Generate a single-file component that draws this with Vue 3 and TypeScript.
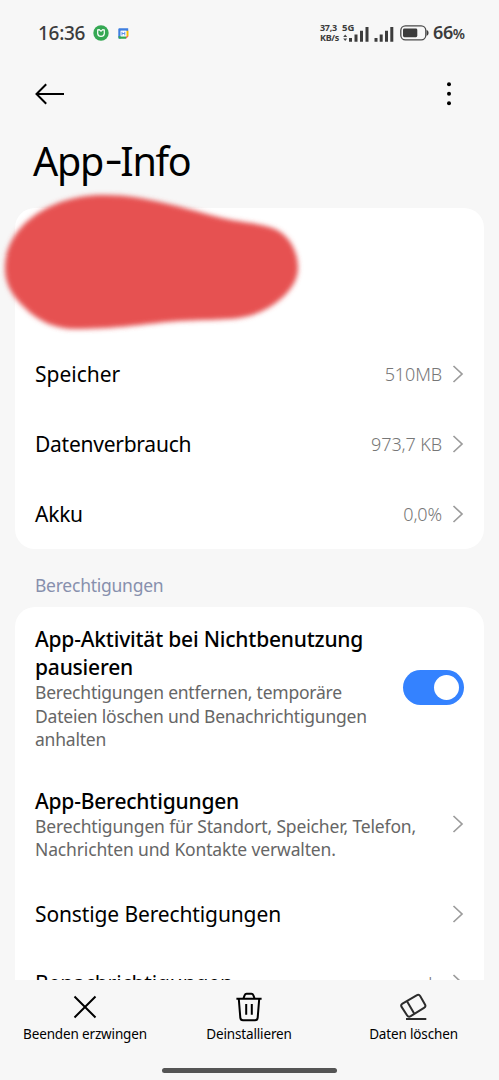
<script setup lang="ts">
interface StatRow {
  id: string
  label: string
  value: string
}

interface PermissionRow {
  id: string
  title: string[]
  description: string[]
  control: 'switch' | 'chevron'
  value?: string
}

interface BottomAction {
  id: 'stop' | 'remove' | 'clear'
  label: string
}

const stats: StatRow[] = [
  { id: 'storage', label: 'Speicher', value: '510MB' },
  { id: 'data', label: 'Datenverbrauch', value: '973,7 KB' },
  { id: 'power', label: 'Akku', value: '0,0%' },
]

const permissions: PermissionRow[] = [
  {
    id: 'pause',
    title: ['App-Aktivität bei Nichtbenutzung', 'pausieren'],
    description: [
      'Berechtigungen entfernen, temporäre',
      'Dateien löschen und Benachrichtigungen',
      'anhalten',
    ],
    control: 'switch',
  },
  {
    id: 'perms',
    title: ['App-Berechtigungen'],
    description: [
      'Berechtigungen für Standort, Speicher, Telefon,',
      'Nachrichten und Kontakte verwalten.',
    ],
    control: 'chevron',
  },
  { id: 'other', title: ['Sonstige Berechtigungen'], description: [], control: 'chevron' },
  { id: 'notify', title: ['Benachrichtigungen'], description: [], control: 'chevron', value: 'Ja' },
]

const actions: BottomAction[] = [
  { id: 'stop', label: 'Beenden erzwingen' },
  { id: 'remove', label: 'Deinstallieren' },
  { id: 'clear', label: 'Daten löschen' },
]
</script>

<template>
  <div class="screen">
    <header class="status">
      <span class="clock">16:36</span>
      <svg class="shield" width="16" height="16" viewBox="0 0 16 16">
        <circle cx="8" cy="8" r="7.7" fill="#35a853" />
        <path d="M4.7 4.9 6.2 4.6 8 6.2 9.8 4.6 11.3 4.9V8.6Q11 11.3 8 11.3T4.7 8.6Z" fill="none" stroke="#fff" stroke-width="1.2" />
      </svg>
      <svg class="calendar" width="11" height="11" viewBox="0 0 11 11">
        <path d="M1 .3H10.2V3H2.8V10.5H.3V1Z" fill="#3f7fe0" />
        <path d="M8.2 2.8H10.5V8.2H8.2Z" fill="#fbbc04" />
        <path d="M.3 8.3H8.2V10.7H1Z" fill="#34a853" />
        <path d="M8.2 8.2H10.5L8.2 10.6Z" fill="#ea4335" />
        <path d="M2.6 2.6H8.4V8.4H2.6Z" fill="#fff" />
        <path d="M4 3.8V7.4M6.8 3.8V7.4M4 5.5H6.8" stroke="#5b8fe6" stroke-width="1" />
      </svg>
      <div class="net">
        <span>37,3</span>
        <span>KB/s</span>
      </div>
      <svg class="bars" width="26" height="20" viewBox="0 0 26 20">
        <path d="M3.2 11.4 5.2 14H1.2ZM3.2 18 5.2 15.4H1.2Z" fill="#444" />
        <path d="M7 15h3v3.7H7zM12.5 11.6h3v7.1h-3zM18 7.8h3v10.9h-3zM23.5 4h3v14.7h-3z" fill="#3c3c3c" />
        <text class="band" x="0" y="8.4">5G</text>
      </svg>
      <svg class="bars second" width="20" height="20" viewBox="0 0 20 20">
        <path d="M.5 15h3v3.7h-3zM5.7 11.6h3v7.1h-3zM11 7.8h3v10.9h-3zM16.3 4h3v14.7h-3z" fill="#3c3c3c" />
      </svg>
      <svg class="battery" width="29" height="16" viewBox="0 0 29 16">
        <rect x=".8" y=".9" width="25" height="14" rx="4.6" fill="none" stroke="#4a4a4a" stroke-width="1.3" />
        <rect x="3" y="3.6" width="14.3" height="8.6" rx="1.4" fill="#3c3c3c" />
        <path d="M26.6 4.8Q28.6 5.8 28.6 7.9T26.6 11Z" fill="#3c3c3c" />
      </svg>
      <span class="percent">66<small>%</small></span>
    </header>

    <nav class="toolbar">
      <svg width="30" height="22" viewBox="0 0 30 22">
        <path d="M29 11H1.5M11.2 1.3 1.5 11 11.2 20.7" fill="none" stroke="#000" stroke-width="2" />
      </svg>
      <svg width="6" height="26" viewBox="0 0 6 26">
        <circle cx="3" cy="3.3" r="2" />
        <circle cx="3" cy="12.8" r="2" />
        <circle cx="3" cy="22.3" r="2" />
      </svg>
    </nav>

    <h1>App<span class="dash">-</span>Info</h1>

    <section class="card summary">
      <div class="identity">
        <svg class="mask" width="320" height="160" viewBox="0 185 320 160">
          <defs>
            <filter id="soft" x="-10%" y="-10%" width="120%" height="120%">
              <feGaussianBlur stdDeviation="2.8" />
            </filter>
          </defs>
          <path
            filter="url(#soft)"
            fill="#e65151"
            d="M5 268C5 226 50 195 104 195C146 195 186 209 222 218C243 223 261 223 275 229C290 236 298 252 298 268C298 289 274 309 249 316C231 321 201 319 167 322C137 325 115 329 75 329C55 329 38 321 25 308C12 296 5 284 5 268Z"
          />
        </svg>
      </div>
      <div v-for="row in stats" :key="row.id" class="row" :class="row.id">
        <span class="title">{{ row.label }}</span>
        <span class="value">{{ row.value }}</span>
        <svg class="chevron" width="12" height="18" viewBox="0 0 12 18">
          <path d="M1.5 1 10 9 1.5 17" />
        </svg>
      </div>
    </section>

    <h2>Berechtigungen</h2>

    <section class="card permissions">
      <div v-for="row in permissions" :key="row.id" class="row" :class="row.id">
        <div class="copy">
          <div v-for="line in row.title" :key="line" class="title">{{ line }}</div>
          <div v-for="line in row.description" :key="line" class="desc">{{ line }}</div>
        </div>
        <div v-if="row.control === 'switch'" class="switch"><i></i></div>
        <template v-else>
          <span v-if="row.value" class="value">{{ row.value }}</span>
          <svg class="chevron" width="12" height="18" viewBox="0 0 12 18">
            <path d="M1.5 1 10 9 1.5 17" />
          </svg>
        </template>
      </div>
    </section>

    <footer class="actions">
      <div class="buttons">
        <div v-for="action in actions" :key="action.id" class="action">
          <svg v-if="action.id === 'stop'" width="30" height="30" viewBox="0 0 30 30">
            <path d="M4.5 4.5 25.5 25.5M25.5 4.5 4.5 25.5" stroke="#000" stroke-width="2" />
          </svg>
          <svg v-else-if="action.id === 'remove'" width="30" height="30" viewBox="0 0 30 30" fill="none" stroke="#000" stroke-width="2">
            <path d="M2.4 6.7H27.6M9.4 6.5 10.6 3.3Q11.2 1.8 12.6 1.8H17.4Q18.8 1.8 19.4 3.3L20.6 6.5M4.8 7 6.3 25.6Q6.5 28.2 9 28.2H21Q23.5 28.2 23.7 25.6L25.2 7M12.2 12V22.8M17.8 12V22.8" />
          </svg>
          <svg v-else width="30" height="30" viewBox="0 0 30 30" fill="none" stroke="#2c2c2c" stroke-width="2">
            <path d="M3.5 11.6 17.6 3.3Q19.9 2 21.3 4.2L26 12.4Q27.2 14.6 25 15.9L11.7 24.2Q9.4 25.5 8 23.3L2.6 14.9Q1.4 12.8 3.5 11.6ZM8 9.2 15.3 21.8M7 27H27.3" />
          </svg>
          <span>{{ action.label }}</span>
        </div>
      </div>
      <div class="handle"></div>
    </footer>
  </div>
</template>

<style>
body {
  margin: 0;
  background: #f7f7f7;
}
</style>

<style scoped>
.screen {
  display: flex;
  flex-direction: column;
  width: 499px;
  height: 1080px;
  overflow: hidden;
  background: #f7f7f7;
  color: #000;
  font-family: "Noto Sans", "Open Sans", sans-serif;
}

svg {
  display: block;
  flex: none;
}

.status {
  display: flex;
  align-items: center;
  height: 66px;
  padding: 0 34px 0 38px;
  box-sizing: border-box;
  color: #3c3c3c;
}

.clock {
  width: 55px;
  font-size: 19px;
  font-weight: 500;
  letter-spacing: -0.3px;
}

.calendar {
  margin-left: 9px;
}

.net {
  display: flex;
  flex-direction: column;
  width: 22px;
  margin-left: auto;
  font-size: 9px;
  font-weight: 700;
  line-height: 10.5px;
  letter-spacing: -0.3px;
  white-space: nowrap;
}

.band {
  font-size: 9.5px;
  font-weight: 700;
  fill: #3c3c3c;
}

.bars {
  overflow: visible;
}

.second {
  margin-left: 6px;
}

.battery {
  margin-left: 6px;
}

.percent {
  width: 32px;
  margin-left: 4px;
  font-size: 18px;
  font-weight: 600;
  letter-spacing: -0.4px;
  line-height: 24px;
  white-space: nowrap;
}

.percent small {
  font-size: 14px;
  letter-spacing: 0;
}

.toolbar {
  display: flex;
  align-items: center;
  justify-content: space-between;
  height: 56px;
  padding: 0 47px 0 35px;
}

h1 {
  height: 86px;
  margin: 0;
  padding-left: 33px;
  box-sizing: border-box;
  font-size: 39.5px;
  font-weight: 400;
  line-height: 78px;
  letter-spacing: -1.3px;
}

.dash {
  display: inline-block;
  margin: 0 2px 0 4px;
  transform: translateY(-3px) scaleX(1.4);
}

.card {
  flex: none;
  width: 469px;
  margin: 0 15px;
  box-sizing: border-box;
  border-radius: 20px;
  background: #fff;
}

.identity {
  position: relative;
  height: 131px;
}

.mask {
  position: absolute;
  top: -23px;
  left: -15px;
}

.row {
  display: flex;
  align-items: center;
  min-height: 70px;
  padding: 0 20px;
  box-sizing: border-box;
}

.summary {
  height: 341px;
}

.title {
  font-size: 21px;
  line-height: 28px;
  white-space: nowrap;
}

.data .title,
.power .title {
  letter-spacing: -0.25px;
}

.value {
  margin-left: auto;
  color: #777;
  font-size: 18px;
  font-weight: 300;
  letter-spacing: -0.12px;
  white-space: nowrap;
}

.chevron {
  margin-left: 10px;
}

.chevron path {
  fill: none;
  stroke: #9c9c9c;
  stroke-width: 1.7;
}

h2 {
  height: 58px;
  margin: 0;
  padding: 0 35px;
  color: #8790ad;
  font-size: 17.5px;
  font-weight: 400;
  line-height: 73px;
  letter-spacing: -0.25px;
}

.permissions {
  flex: 1;
  min-height: 0;
  padding-top: 18px;
  border-radius: 20px 20px 0 0;
  overflow: hidden;
}

.permissions .title {
  font-weight: 500;
  letter-spacing: -0.2px;
}

.permissions .other .title,
.permissions .notify .title {
  font-weight: 400;
  letter-spacing: -0.12px;
}

.desc {
  color: #666;
  font-size: 17.5px;
  line-height: 23.5px;
  letter-spacing: -0.22px;
  white-space: nowrap;
}

.pause {
  height: 126.5px;
}

.pause .switch {
  margin-top: -2px;
}

.perms {
  height: 75px;
  margin: 35px 0 17.5px;
}

.perms .desc {
  letter-spacing: -0.15px;
}

.row.notify {
  margin-top: -1px;
}

.copy {
  width: 330px;
}

.switch {
  width: 61px;
  height: 35px;
  margin-left: auto;
  padding: 5px;
  box-sizing: border-box;
  border-radius: 18px;
  background: #3482ff;
}

.switch i {
  display: block;
  width: 25px;
  height: 25px;
  margin-left: 26px;
  border-radius: 50%;
  background: #fff;
}

.permissions .chevron {
  margin-left: auto;
}

.permissions .value + .chevron {
  margin-left: 10px;
}

.actions {
  display: flex;
  flex: none;
  flex-direction: column;
  align-items: center;
  justify-content: space-between;
  height: 100px;
  padding: 12px 0 7px;
  box-sizing: border-box;
  background: #f7f7f7;
}

.buttons {
  display: grid;
  grid-template-columns: 170px 158px 171px;
}

.action {
  display: flex;
  flex-direction: column;
  align-items: center;
  font-size: 13.5px;
  line-height: 24px;
  letter-spacing: -0.15px;
  white-space: nowrap;
}

.handle {
  width: 175px;
  height: 5px;
  border-radius: 3px;
  background: #555;
}
</style>
